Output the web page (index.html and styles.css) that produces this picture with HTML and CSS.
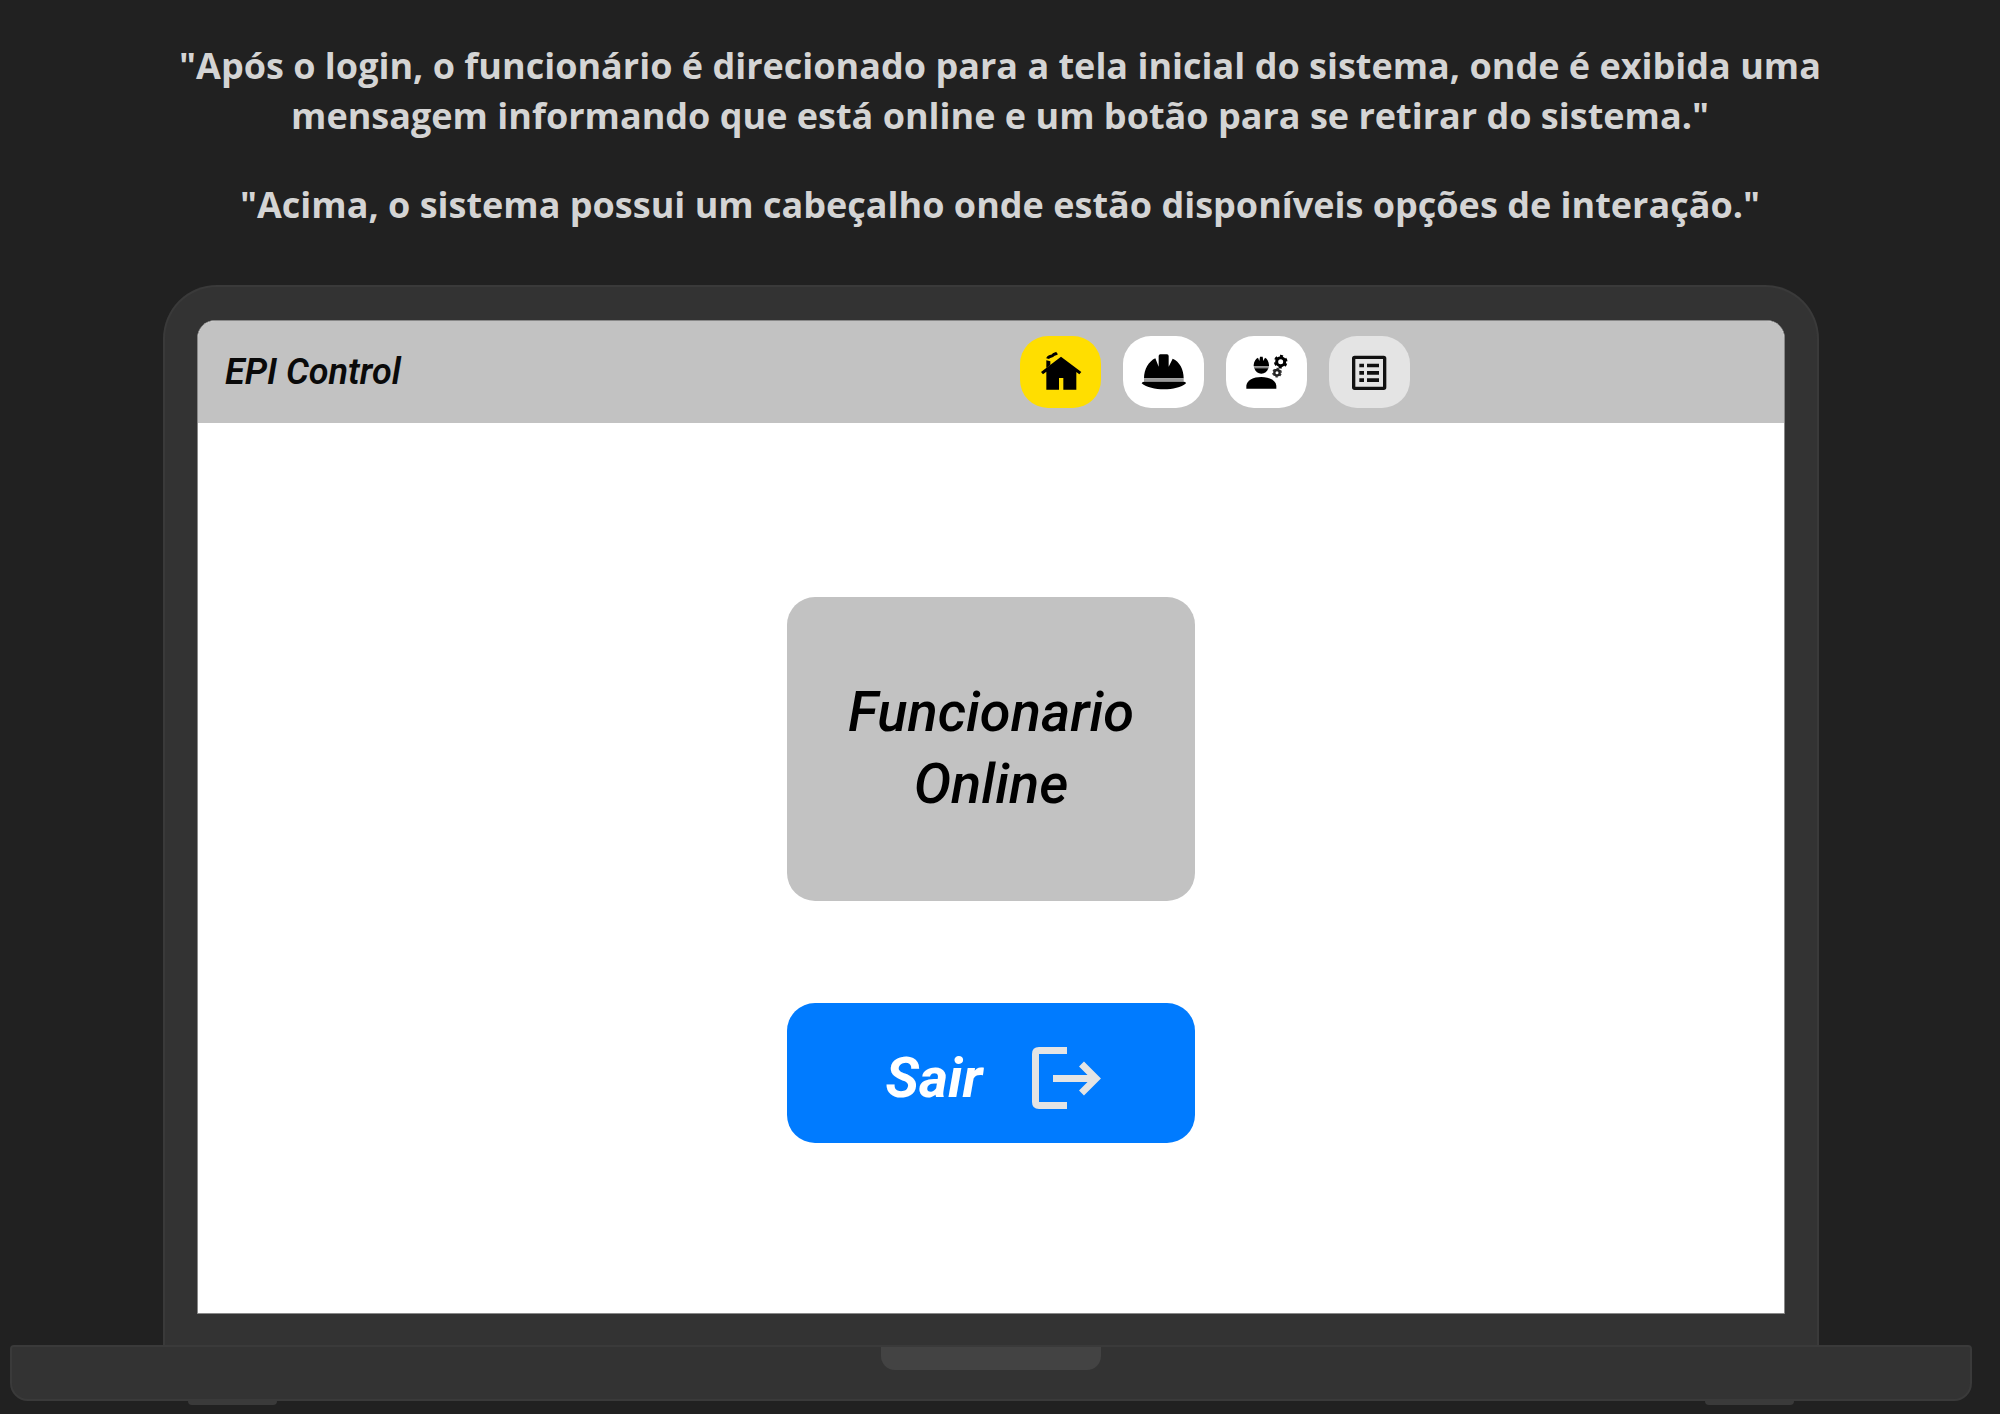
FILE: index.html
```html
<!DOCTYPE html>
<html lang="pt-BR">
<head>
  <meta charset="utf-8">
  <meta name="viewport" content="width=device-width, initial-scale=1">
  <title>EPI Control</title>
  <link rel="stylesheet" href="styles.css">
</head>
<body>
  <section class="intro">
    <p>"Após o login, o funcionário é direcionado para a tela inicial do sistema, onde é exibida uma mensagem informando que está online e um botão para se retirar do sistema."</p>
    <p>"Acima, o sistema possui um cabeçalho onde estão disponíveis opções de interação."</p>
  </section>

  <div class="laptop">
    <div class="lid">
      <div class="screen">
        <header class="topbar">
          <span class="brand">EPI Control</span>
          <nav class="menu">
            <a class="menu-item menu-item-active" href="#inicio" aria-label="Início">
              <svg viewBox="62 45 243 216" aria-hidden="true">
                <path d="M125 153 L185 107 L246 153 L240 160 L231 153 V206 H192 V171 H179 V206 H141 V152 L131 160 Z"/>
                <path d="M141 118 L153 121 V132 L141 141 Z"/>
                <path d="M145 113 C148 103 158 108 161 103 C164 98 168 100 173 96" fill="none" stroke="#000" stroke-width="9"/>
              </svg>
            </a>
            <a class="menu-item" href="#epis" aria-label="EPIs">
              <svg viewBox="371 45 243 216" aria-hidden="true">
                <path d="M434 172 C434 145 448 121 468 112 L478 137 V105 Q478 100 483 100 H503 Q508 100 508 105 V137 L520 113 C541 122 553 145 553 172 Z"/>
                <path d="M434 172 H553 V182 H434 Z" fill="#999"/>
                <path d="M427 187 Q428 182 434 182 H554 Q560 182 560 187 C532 211 456 211 427 187 Z"/>
              </svg>
            </a>
            <a class="menu-item" href="#funcionarios" aria-label="Funcionários">
              <svg viewBox="78 45 243 216" aria-hidden="true">
                <path d="M161 136 V132 C162 121 167 113 174 110 L178 120 L180 107 H188 L190 120 L195 110 C202 113 206 121 207 132 V136 Z"/>
                <path d="M162 136 H206 V142 H162 Z" fill="#888"/>
                <path d="M163 142 H205 C202 152 194 158 184 158 C174 158 166 152 163 142 Z"/>
                <path d="M139 203 V194 C141 178 160 168 184 168 C208 168 227 178 229 194 V203 Z"/>
                <g fill="none" stroke="#000">
                  <circle cx="242" cy="122" r="12" stroke-width="9"/>
                  <circle cx="242" cy="122" r="17" stroke-width="7" stroke-dasharray="9 8.8" transform="rotate(17 242 122)"/>
                  <circle cx="231" cy="155" r="8" stroke-width="7" stroke="#222"/>
                  <circle cx="231" cy="155" r="12" stroke-width="5" stroke="#333" stroke-dasharray="7 5.57" transform="rotate(17 231 155)"/>
                </g>
              </svg>
            </a>
            <a class="menu-item menu-item-muted" href="#relatorios" aria-label="Relatórios">
              <svg viewBox="387 45 243 216" aria-hidden="true">
                <rect x="461" y="109" width="93" height="93" rx="3" fill="none" stroke="#111" stroke-width="10"/>
                <path fill="#111" d="M478 128h14v11h-14zM501 128h36v11h-36zM478 150h14v11h-14zM501 150h36v11h-36zM478 172h14v11h-14zM501 172h36v11h-36z"/>
              </svg>
            </a>
          </nav>
        </header>

        <main class="content">
          <div class="status">Funcionario Online</div>
          <button class="exit" type="button">
            Sair
            <svg class="exit-icon" viewBox="0 0 69 62" aria-hidden="true">
              <path d="M35 3.500 H7 Q3.500 3.500 3.500 7 V55 Q3.500 58.500 7 58.500 H35 M21 31.500 H64 M49.500 17 L64 31.500 L49.500 46" fill="none" stroke="#e4e4e4" stroke-width="7"/>
            </svg>
          </button>
        </main>
      </div>
    </div>
    <div class="base"><div class="notch"></div></div>
    <div class="feet"><span class="foot"></span><span class="foot"></span></div>
  </div>
</body>
</html>
```
FILE: styles.css
```css
* {
  box-sizing: border-box;
}

body {
  margin: 0;
  background: #212121;
}

.intro {
  display: flex;
  flex-direction: column;
  gap: 39px;
  max-width: 1700px;
  margin: 0 auto;
  padding: 41px 24px 55px;
  color: #d4d4d4;
  font: 700 36px/50px "Open Sans", "Noto Sans", sans-serif;
  text-align: center;
}

.intro p {
  margin: 0;
}

.laptop {
  padding: 0 28px 9px 10px;
}

.lid {
  width: 84.4%;
  margin: 0 auto;
  padding: 33px 32px 31px;
  background: #333;
  border: 2px solid #3a3a3a;
  border-bottom: 0;
  border-radius: 54px 54px 0 0;
}

.screen {
  overflow: hidden;
  background: #fff;
  border: 1px solid #888;
  border-radius: 18px 18px 0 0;
  font-family: Roboto, sans-serif;
  font-style: italic;
}

.topbar {
  display: grid;
  grid-template-columns: 1fr 1fr;
  align-items: center;
  height: 102px;
  background: #c2c2c2;
}

.brand {
  padding-left: 27px;
  color: #0a0a0a;
  font-size: 36px;
  font-weight: 600;
  line-height: 48px;
}

.menu {
  display: flex;
  gap: 22px;
  padding-left: 29px;
}

.menu-item {
  width: 81px;
  height: 72px;
  background: #fff;
  border-radius: 28px;
}

.menu-item-active {
  background: #ffde00;
}

.menu-item-muted {
  background: #e4e4e4;
}

.menu-item svg {
  display: block;
  width: 100%;
  height: 100%;
}

.content {
  display: flex;
  flex-direction: column;
  align-items: center;
  gap: 102px;
  padding: 174px 24px 170px;
}

.status,
.exit {
  display: flex;
  align-items: center;
  justify-content: center;
  width: 408px;
  border-radius: 28px;
  font-size: 56px;
  line-height: 72px;
}

.status {
  height: 304px;
  padding: 0 48px 2px;
  background: #c2c2c2;
  color: #000;
  font-weight: 500;
  text-align: center;
}

.exit {
  gap: 50px;
  height: 140px;
  padding: 10px 0 0 5px;
  border: 0;
  background: #007bff;
  color: #fff;
  font-family: inherit;
  font-style: inherit;
  font-weight: 700;
}

.exit-icon {
  width: 69px;
  height: 62px;
}

.base {
  height: 56px;
  background: #333;
  border: 2px solid #3a3a3a;
  border-radius: 4px 4px 18px 18px;
}

.notch {
  width: 220px;
  height: 23px;
  margin: 0 auto;
  background: #434343;
  border-radius: 0 0 14px 14px;
}

.feet {
  display: flex;
  justify-content: space-between;
  padding: 0 178px;
}

.foot {
  width: 89px;
  height: 4px;
  background: #3a3a3a;
  border-radius: 0 0 4px 4px;
}
```
